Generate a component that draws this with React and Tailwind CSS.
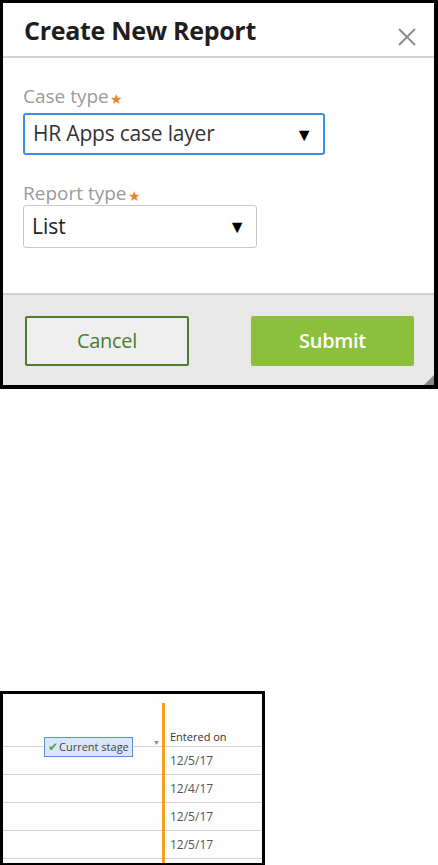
export default function App() {
  const font = { fontFamily: '"Open Sans", "Noto Sans", sans-serif' };
  return (
    <div className="w-[438px] h-[865px] bg-white flex flex-col overflow-hidden font-['Open_Sans',sans-serif]">
      {/* Top dialog screenshot */}
      <div className="h-[389px] border-l-[3px] border-t-[3px] border-r-[4px] border-b-[4px] border-black flex flex-col bg-white">
        <div className="h-[53px] flex items-center justify-between pl-[21px] pr-[16px] pt-[2px]">
          <span className="text-[25px] font-bold text-[#1e1e1e] tracking-[-0.3px]">Create New Report</span>
          <svg width="22" height="22" viewBox="0 0 22 22" className="mt-[12px]">
            <path d="M3 3 L19 19 M19 3 L3 19" stroke="#8a8a8a" strokeWidth="1.8" />
          </svg>
        </div>
        <div className="h-[2px] bg-[#d2d2d2]" />
        <div className="flex-1 flex flex-col pl-[20px] pt-[26px]">
          <div className="flex items-end h-[22px] text-[19px] text-[#9a9a9a] leading-none">
            <span>Case type</span>
            <span className="text-[#e08a2c] text-[14px] ml-[1px] mb-[0px]">★</span>
          </div>
          <div className="mt-[7px] w-[302px] h-[42px] border-2 border-[#3d8fe0] rounded-[3px] flex items-center justify-between pl-[8px] pr-[10px]">
            <span className="text-[21px] text-[#333] tracking-[-0.2px]">HR Apps case layer</span>
            <span className="text-[18px] text-black">▼</span>
          </div>
          <div className="mt-[26px] flex items-end h-[22px] text-[19px] text-[#9a9a9a] leading-none">
            <span>Report type</span>
            <span className="text-[#e08a2c] text-[14px] ml-[1px] mb-[0px]">★</span>
          </div>
          <div className="mt-[2px] w-[234px] h-[43px] border border-[#c8c8c8] rounded-[3px] flex items-center justify-between pl-[8px] pr-[10px]">
            <span className="text-[21px] text-[#222]">List</span>
            <span className="text-[18px] text-black">▼</span>
          </div>
        </div>
        <div className="h-[2px] bg-[#d0d0d0]" />
        <div className="h-[90px] bg-[#e8e8e8] flex items-start justify-between pl-[22px] pr-[20px] pt-[21px] relative">
          <div className="w-[164px] h-[50px] border-2 border-[#4d7c2e] rounded-[2px] bg-[#efefef] flex items-center justify-center text-[20px] text-[#4d7c2e] tracking-[-0.3px]">
            Cancel
          </div>
          <div className="w-[163px] h-[50px] bg-[#8bbf3c] rounded-[2px] flex items-center justify-center text-[20px] font-semibold text-white tracking-[-0.3px]">
            Submit
          </div>
          <svg width="10" height="10" viewBox="0 0 10 10" className="absolute right-0 bottom-0">
            <path d="M10 0 L10 10 L0 10 Z" fill="#8a8a8a" />
          </svg>
        </div>
      </div>

      {/* Bottom table screenshot */}
      <div className="mt-[302px] w-[265px] h-[174px] border-l-[3px] border-t-[3px] border-r-[3px] border-b-[2px] border-black bg-[#fdfdfd] relative flex flex-col" style={font}>
        <div className="h-[53px] border-b border-[#d4d4d4] flex items-end">
          <div className="w-[159px]" />
          <div className="pl-[8px] pb-[1px] text-[11px] text-[#333]">Entered on</div>
        </div>
        {["12/5/17", "12/4/17", "12/5/17", "12/5/17"].map((d, i) => (
          <div key={i} className="h-[28px] border-b border-[#d4d4d4] flex items-center">
            <div className="w-[159px]" />
            <div className="pl-[8px] text-[12px] text-[#555]">{d}</div>
          </div>
        ))}
        <div className="absolute left-[159px] top-[9px] bottom-0 w-[3px] bg-[#f5a01a]" />
        <div className="absolute left-[150px] top-[44px] text-[7px] text-[#888]">▼</div>
        <div className="absolute left-[41px] top-[43px] w-[89px] h-[20px] border border-[#5b8fd6] bg-[#dbe7f7] flex items-center text-[11px] text-[#444] pl-[3px] whitespace-nowrap">
          <span className="text-[#3fae3f] text-[12px] mr-[1px]">✔</span>Current stage
        </div>
      </div>
    </div>
  );
}
